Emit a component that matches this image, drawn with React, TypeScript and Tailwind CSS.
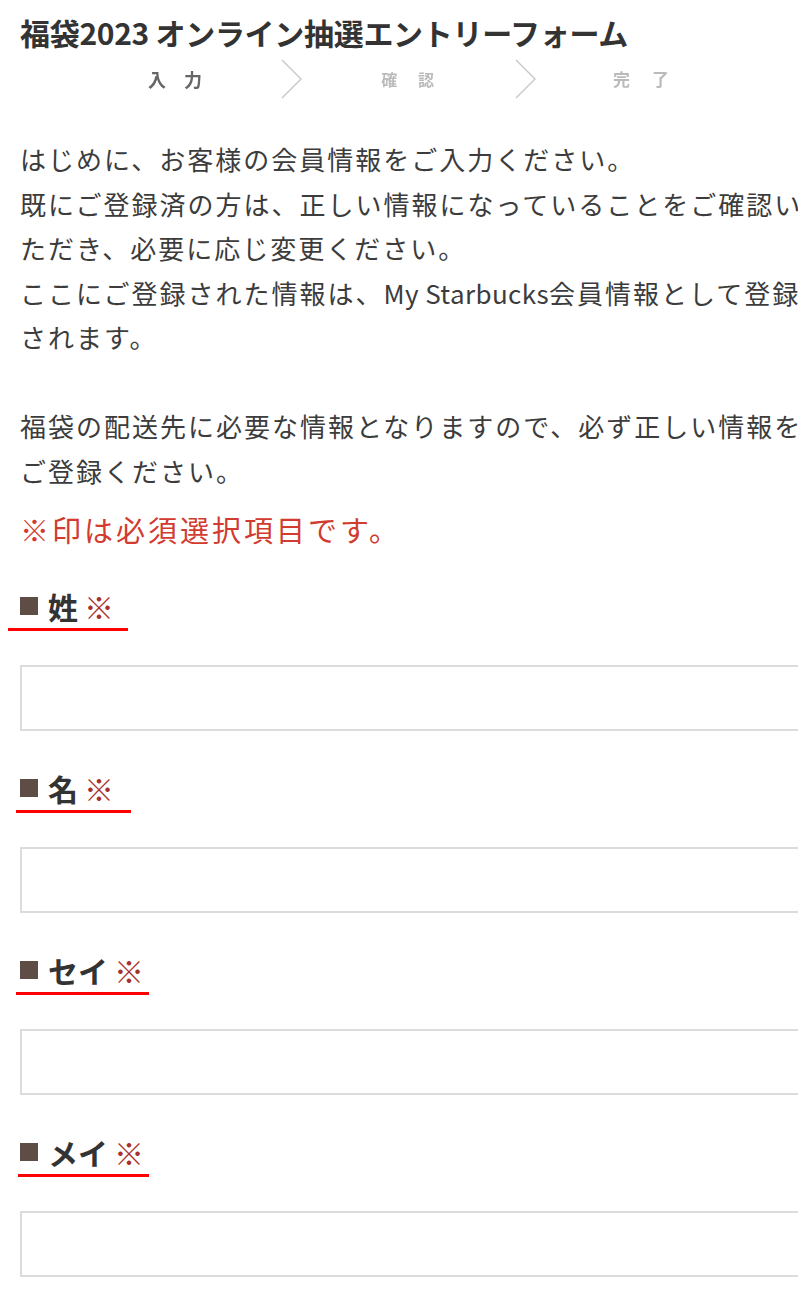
const fields = [
  { label: "姓", underline: "-ml-[12px] pl-[12px] w-[120px]" },
  { label: "名", underline: "-ml-[4px] pl-[4px] w-[115px]" },
  { label: "セイ", underline: "-ml-[4px] pl-[4px] w-[133px]" },
  { label: "メイ", underline: "-ml-[2px] pl-[2px] w-[131px]" },
];

function Chevron() {
  return (
    <svg width="22" height="40" viewBox="0 0 22 40" className="shrink-0">
      <polyline points="1,1 20,20 1,39" fill="none" stroke="#c8c8c8" strokeWidth="1.4" />
    </svg>
  );
}

function Steps() {
  return (
    <div className="ml-[100px] flex h-[42px] items-center">
      <div className="w-[110px] pl-[18px] text-center text-[18px] font-bold tracking-[1em] text-[#666] blur-[0.4px]">入力</div>
      <div className="flex w-[124px] justify-center">
        <Chevron />
      </div>
      <div className="w-[110px] pl-[18px] text-center text-[16px] font-bold tracking-[1.3em] text-[#bbb] blur-[0.4px]">確認</div>
      <div className="flex w-[124px] justify-center">
        <Chevron />
      </div>
      <div className="w-[110px] pl-[18px] text-center text-[17px] font-bold tracking-[1.3em] text-[#bbb] blur-[0.4px]">完了</div>
    </div>
  );
}

export default function App() {
  return (
    <div className="h-[1293px] w-[798px] overflow-hidden bg-white font-['Noto_Sans_CJK_JP','Noto_Sans',sans-serif] text-[#333]">
      <div className="w-[820px] pl-[20px] pt-[14px]">
        <h1 className="text-[30px] font-bold leading-[36px] tracking-[-0.3px] text-[#333]">
          福袋2023 オンライン抽選エントリーフォーム
        </h1>
        <div className="mt-[8px]">
          <Steps />
        </div>

        <p className="mt-[37px] text-[26px] leading-[44.5px] tracking-[2px] text-[#3c3c3c]">
          はじめに、お客様の会員情報をご入力ください。
          <br />
          既にご登録済の方は、正しい情報になっていることをご確認いただき、必要に応じ変更ください。
          <br />
          ここにご登録された情報は、<span className="tracking-[0.4px]">My Starbucks</span>会員情報として登録されます。
          <br />
          <br />
          福袋の配送先に必要な情報となりますので、必ず正しい情報をご登録ください。
        </p>

        <p className="mt-[16px] text-[29px] leading-[40px] tracking-[3px] text-[#d13b30]">※印は必須選択項目です。</p>

        {fields.map((f) => (
          <div key={f.label} className="mt-[37px]">
            <div className={`flex h-[45px] items-start border-b-[3px] border-[#ff0000] ${f.underline}`}>
              <div className="flex h-[40px] items-center">
                <span className="h-[18px] w-[18px] bg-[#5e4d45]" />
                <span className="ml-[10px] text-[30px] font-bold leading-[40px] text-[#333]">{f.label}</span>
                <span className="ml-[6px] text-[30px] leading-[40px] text-[#a8302c]">※</span>
              </div>
            </div>
            <div className="mt-[34px] h-[66px] w-[800px] border-2 border-[#dcdcdc] bg-white" />
          </div>
        ))}
      </div>
    </div>
  );
}
